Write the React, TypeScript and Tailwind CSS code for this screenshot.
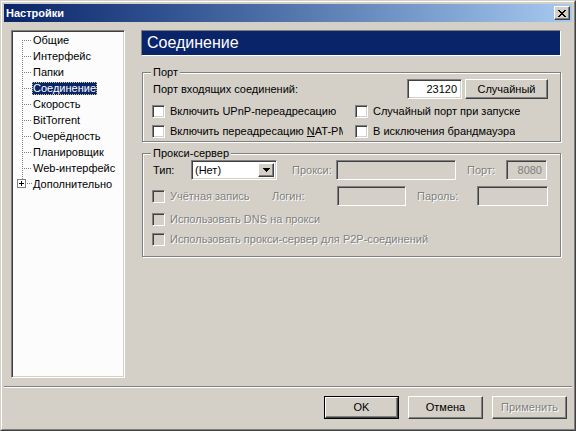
import React from 'react';

const sunken =
  'border border-t-[#808080] border-l-[#808080] border-r-white border-b-white shadow-[inset_1px_1px_0_#404040,inset_-1px_-1px_0_#d4d0c8]';
const raised =
  'border border-t-white border-l-white border-r-[#404040] border-b-[#404040] shadow-[inset_-1px_-1px_0_#808080,inset_1px_1px_0_#d4d0c8]';
const grayText = 'text-[#808080] [text-shadow:1px_1px_0_#fff]';

const treeItems = [
  'Общие',
  'Интерфейс',
  'Папки',
  'Соединение',
  'Скорость',
  'BitTorrent',
  'Очерёдность',
  'Планировщик',
  'Web-интерфейс',
  'Дополнительно',
];

function TreeRow({ label, index }: { label: string; index: number }) {
  const first = index === 0;
  const last = index === treeItems.length - 1;
  const selected = label === 'Соединение';
  return (
    <div className="flex h-[16px] items-center">
      <svg width="19" height="16" viewBox="0 0 19 16" shapeRendering="crispEdges" className="shrink-0">
        {last ? (
          <>
            <line x1="9.5" y1="0" x2="9.5" y2="4" stroke="#808080" strokeDasharray="1 1" />
            <rect x="4.5" y="3.5" width="8" height="8" fill="#fff" stroke="#808080" />
            <line x1="6" y1="7.5" x2="11" y2="7.5" stroke="#000" />
            <line x1="8.5" y1="5" x2="8.5" y2="10" stroke="#000" />
            <line x1="14" y1="7.5" x2="19" y2="7.5" stroke="#808080" strokeDasharray="1 1" />
          </>
        ) : (
          <>
            <line x1="9.5" y1={first ? 8 : 0} x2="9.5" y2="16" stroke="#808080" strokeDasharray="1 1" />
            <line x1="11" y1="8.5" x2="19" y2="8.5" stroke="#808080" strokeDasharray="1 1" />
          </>
        )}
      </svg>
      <span
        className={
          selected
            ? 'h-[13px] px-[1px] leading-[13px] bg-[#0a246a] text-white outline-1 outline-dotted outline-[#d8c880] -outline-offset-1'
            : 'h-[13px] px-[1px] leading-[13px] text-black'
        }
      >
        {label}
      </span>
    </div>
  );
}

function Checkbox({ label, disabled, clipWidth }: { label: React.ReactNode; disabled?: boolean; clipWidth?: string }) {
  return (
    <div className="flex h-[13px] items-center">
      <span className={`h-[13px] w-[13px] shrink-0 ${sunken} ${disabled ? 'bg-[#d4d0c8]' : 'bg-white'}`} />
      <span
        className={`ml-[5px] overflow-hidden whitespace-nowrap leading-[13px] ${clipWidth ?? ''} ${
          disabled ? grayText : 'text-black'
        }`}
      >
        {label}
      </span>
    </div>
  );
}

function Field({ width, value, disabled }: { width: string; value?: string; disabled?: boolean }) {
  return (
    <div
      className={`flex h-[20px] shrink-0 items-center justify-end pr-[4px] ${width} ${sunken} ${
        disabled ? 'bg-[#d4d0c8] text-[#808080]' : 'bg-white text-black'
      }`}
    >
      {value}
    </div>
  );
}

function Button({ label, width, isDefault, disabled, height = 'h-[23px]' }: { label: string; width: string; isDefault?: boolean; disabled?: boolean; height?: string }) {
  return (
    <div className={`${width} ${height} shrink-0 bg-[#d4d0c8] ${isDefault ? 'border border-black' : ''}`}>
      <div className={`flex h-full w-full items-center justify-center font-normal ${raised} ${disabled ? grayText : 'text-black'}`}>
        {label}
      </div>
    </div>
  );
}

function Group({ title, children, className }: { title: string; children: React.ReactNode; className?: string }) {
  return (
    <fieldset
      className={`ml-[1px] w-[419px] border border-[#808080] pl-[9px] pr-[12px] shadow-[1px_1px_0_#fff,inset_1px_1px_0_#fff] ${className ?? ''}`}
    >
      <legend className="ml-[-1px] bg-[#d4d0c8] px-[2px] leading-[13px]">{title}</legend>
      {children}
    </fieldset>
  );
}

export default function App() {
  return (
    <div className="h-[431px] w-[576px] bg-[#d4d0c8] font-['Liberation_Sans',Arial,sans-serif] text-[11px] font-normal leading-[13px] text-black">
      <div className="h-full w-full border border-t-[#d4d0c8] border-l-[#d4d0c8] border-r-[#404040] border-b-[#404040]">
        <div className="flex h-full w-full flex-col border border-t-white border-l-white border-r-[#808080] border-b-[#808080] p-[2px]">
          {/* title bar */}
          <div className="flex h-[18px] shrink-0 items-center justify-between bg-gradient-to-r from-[#0a246a] to-[#a6caf0] pl-[2px] pr-[2px]">
            <span className="font-bold text-white">Настройки</span>
            <div className={`flex h-[14px] w-[16px] items-center justify-center bg-[#d4d0c8] ${raised}`}>
              <svg width="8" height="7" viewBox="0 0 8 7" shapeRendering="crispEdges">
                <path d="M0 0h2v1h-2zM6 0h2v1h-2zM1 1h2v1h-2zM5 1h2v1h-2zM2 2h4v1h-4zM3 3h2v1h-2zM2 4h4v1h-4zM1 5h2v1h-2zM5 5h2v1h-2zM0 6h2v1h-2zM6 6h2v1h-2z" fill="#000" />
              </svg>
            </div>
          </div>

          {/* body */}
          <div className="ml-[7px] mt-[8px] flex h-[348px] shrink-0">
            <div className={`h-full w-[114px] shrink-0 bg-[#fcfcfc] ${sunken}`}>
              <div className="flex flex-col pl-[1px] pt-[1px]">
                {treeItems.map((t, i) => (
                  <TreeRow key={t} label={t} index={i} />
                ))}
              </div>
            </div>

            <div className="ml-[16px] flex w-[420px] flex-col">
              <div className="flex h-[26px] items-center border border-t-[#808080] border-l-[#808080] border-r-white border-b-white bg-[#0a246a] pl-[5px] text-[16px] leading-[18px] text-white">
                Соединение
              </div>

              <Group title="Порт" className="mt-[10px] pb-[3px]">
                <div className="flex h-[20px] items-center">
                  <span className="pl-[1px]">Порт входящих соединений:</span>
                  <div className="flex-1" />
                  <Field width="w-[55px]" value="23120" />
                  <div className="ml-[3px]">
                    <Button label="Случайный" width="w-[83px]" height="h-[20px]" />
                  </div>
                </div>
                <div className="mt-[6px] flex">
                  <div className="w-[203px]">
                    <Checkbox label="Включить UPnP-переадресацию" />
                  </div>
                  <Checkbox label="Случайный порт при запуске" />
                </div>
                <div className="mt-[7px] flex">
                  <div className="w-[203px]">
                    <Checkbox
                      clipWidth="w-[173px]"
                      label={
                        <>
                          Включить переадресацию <span className="underline">N</span>AT-PMP
                        </>
                      }
                    />
                  </div>
                  <Checkbox label="В исключения брандмауэра" />
                </div>
              </Group>

              <Group title="Прокси-сервер" className="mt-[5px] pb-[10px]">
                <div className="flex h-[20px] items-center">
                  <span className="w-[39px] shrink-0 pl-[1px]">Тип:</span>
                  <div className={`flex h-[20px] w-[86px] shrink-0 items-center bg-white ${sunken} p-[2px]`}>
                    <span className="flex-1 pl-[1px]">(Нет)</span>
                    <div className={`flex h-full w-[16px] items-center justify-center bg-[#d4d0c8] ${raised}`}>
                      <svg width="7" height="4" viewBox="0 0 7 4" shapeRendering="crispEdges">
                        <path d="M0 0h7v1h-7zM1 1h5v1h-5zM2 2h3v1h-3zM3 3h1v1h-1z" fill="#000" />
                      </svg>
                    </div>
                  </div>
                  <span className={`ml-[15px] w-[44px] shrink-0 ${grayText}`}>Прокси:</span>
                  <Field width="w-[120px]" disabled />
                  <span className={`ml-[11px] w-[39px] shrink-0 ${grayText}`}>Порт:</span>
                  <Field width="w-[41px]" value="8080" disabled />
                </div>
                <div className="mt-[6px] flex h-[20px] items-center">
                  <div className="w-[120px] shrink-0">
                    <Checkbox label="Учётная запись" disabled />
                  </div>
                  <span className={`w-[65px] shrink-0 ${grayText}`}>Логин:</span>
                  <Field width="w-[69px]" disabled />
                  <span className={`ml-[11px] w-[60px] shrink-0 ${grayText}`}>Пароль:</span>
                  <Field width="w-[71px]" disabled />
                </div>
                <div className="mt-[7px]">
                  <Checkbox label="Использовать DNS на прокси" disabled />
                </div>
                <div className="mt-[7px]">
                  <Checkbox label="Использовать прокси-сервер для P2P-соединений" disabled />
                </div>
              </Group>
            </div>
          </div>

          {/* separator */}
          <div className="mt-[8px] h-[2px] shrink-0 border-t border-b border-t-[#808080] border-b-white" />

          {/* buttons */}
          <div className="mt-[8px] flex justify-end gap-[9px] pr-[5px]">
            <Button label="OK" width="w-[75px]" isDefault />
            <Button label="Отмена" width="w-[75px]" />
            <Button label="Применить" width="w-[75px]" disabled />
          </div>
        </div>
      </div>
    </div>
  );
}
